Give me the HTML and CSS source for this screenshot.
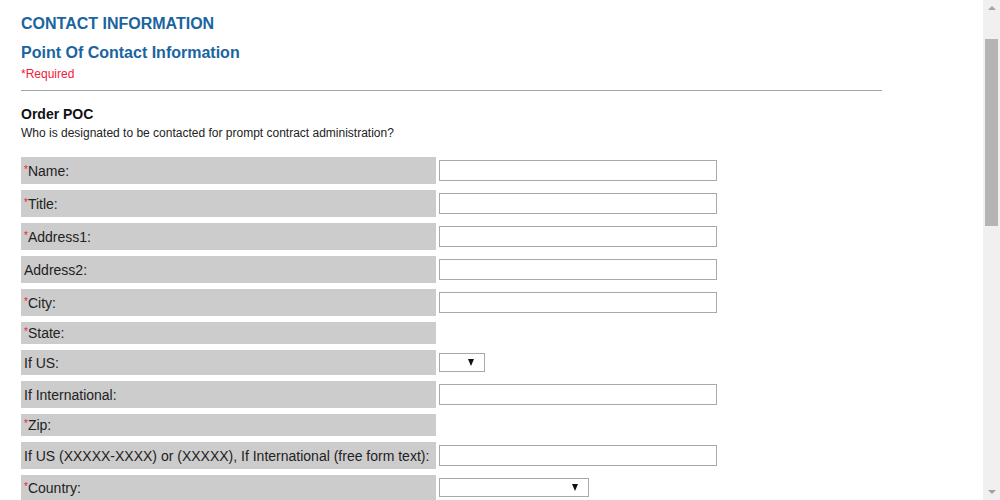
FILE: index.html
```html
<!DOCTYPE html>
<html>
<head>
<meta charset="utf-8">
<link rel="stylesheet" href="styles.css">
</head>
<body>
<div class="page">
  <h1 class="title">CONTACT INFORMATION</h1>
  <h2 class="subtitle">Point Of Contact Information</h2>
  <div class="required"><span>*</span>Required</div>
  <hr class="rule">
  <h3 class="section">Order POC</h3>
  <p class="desc">Who is designated to be contacted for prompt contract administration?</p>

  <div class="form">
    <div class="row"><div class="label"><span class="req">*</span>Name:</div><div class="field"><input class="text" type="text"></div></div>
    <div class="row"><div class="label"><span class="req">*</span>Title:</div><div class="field"><input class="text" type="text"></div></div>
    <div class="row"><div class="label"><span class="req">*</span>Address1:</div><div class="field"><input class="text" type="text"></div></div>
    <div class="row"><div class="label">Address2:</div><div class="field"><input class="text" type="text"></div></div>
    <div class="row"><div class="label"><span class="req">*</span>City:</div><div class="field"><input class="text" type="text"></div></div>
    <div class="row"><div class="label empty"><span class="req">*</span>State:</div><div class="field"></div></div>
    <div class="row"><div class="label">If US:</div><div class="field"><span class="sel small"><span class="arrow"></span></span></div></div>
    <div class="row"><div class="label">If International:</div><div class="field"><input class="text" type="text"></div></div>
    <div class="row"><div class="label empty"><span class="req">*</span>Zip:</div><div class="field"></div></div>
    <div class="row"><div class="label">If US (XXXXX-XXXX) or (XXXXX), If International (free form text):</div><div class="field"><input class="text" type="text"></div></div>
    <div class="row"><div class="label"><span class="req">*</span>Country:</div><div class="field"><span class="sel wide"><span class="arrow"></span></span></div></div>
    <div class="row"><div class="label"><span class="req">*</span>Phone:</div><div class="field"><input class="text" type="text"></div></div>
    <div class="row"><div class="label">Fax:</div><div class="field"><input class="text" type="text"></div></div>
  </div>
</div>
<div class="scrollbar">
  <div class="sb-up"></div>
  <div class="sb-thumb"></div>
  <div class="sb-down"></div>
</div>
</body>
</html>
```
FILE: styles.css
```css
html, body {
  margin: 0;
  padding: 0;
  overflow: hidden;
  background: #fff;
}
body {
  font-family: "Liberation Sans", Arial, sans-serif;
  color: #222;
}
.page {
  width: 861px;
  padding: 15px 0 0 21px;
}
.title {
  margin: 0;
  font-size: 16px;
  line-height: 18px;
  font-weight: bold;
  color: #1a64a0;
}
.subtitle {
  margin: 11px 0 0 0;
  font-size: 16px;
  line-height: 18px;
  font-weight: bold;
  color: #1a64a0;
}
.required {
  margin-top: 5px;
  font-size: 12px;
  line-height: 14px;
  color: #f0203a;
}
.rule {
  margin: 9px 0 0 0;
  border: 0;
  border-top: 1px solid #a5a5a5;
  height: 0;
}
.section {
  margin: 15px 0 0 0;
  font-size: 14px;
  line-height: 16px;
  font-weight: bold;
  color: #111;
}
.desc {
  margin: 4px 0 0 0;
  font-size: 12px;
  line-height: 14px;
  color: #222;
}
.form {
  margin-top: 17px;
  display: flex;
  flex-direction: column;
  gap: 6px;
}
.row {
  display: flex;
  gap: 3px;
}
.label {
  width: 415px;
  flex: none;
  box-sizing: border-box;
  background: #cccccc;
  padding-left: 3px;
  font-size: 14px;
  color: #222;
  display: flex;
  align-items: center;
  white-space: nowrap;
}
.label.empty {
  min-height: 22px;
}
.req {
  color: #f0203a;
  font-size: 10px;
  line-height: 10px;
  position: relative;
  top: -1px;
}
.field {
  padding: 3px 0;
  display: flex;
  align-items: center;
}
.text {
  box-sizing: border-box;
  width: 278px;
  height: 21px;
  margin: 0;
  border: 1px solid #a9a9a9;
  background: #fff;
  padding: 0 2px;
}
.sel {
  position: relative;
  display: block;
  box-sizing: border-box;
  height: 19px;
  border: 1px solid #a9a9a9;
  background: #fff;
}
.sel.small { width: 46px; }
.sel.wide { width: 150px; }
.arrow {
  position: absolute;
  right: 10px;
  top: 5px;
  width: 0;
  height: 0;
  border-left: 3.5px solid transparent;
  border-right: 3.5px solid transparent;
  border-top: 7px solid #111;
}
.scrollbar {
  position: fixed;
  top: 0;
  right: 0;
  width: 17px;
  height: 500px;
  background: #f0f0f0;
}
.sb-up {
  position: absolute;
  top: 6px;
  left: 5px;
  width: 0;
  height: 0;
  border-left: 4px solid transparent;
  border-right: 4px solid transparent;
  border-bottom: 4px solid #a3a3a3;
}
.sb-down {
  position: absolute;
  bottom: 6px;
  left: 5px;
  width: 0;
  height: 0;
  border-left: 4px solid transparent;
  border-right: 4px solid transparent;
  border-top: 4px solid #a3a3a3;
}
.sb-thumb {
  position: absolute;
  top: 39px;
  left: 2px;
  width: 13px;
  height: 187px;
  background: #b4b4b4;
}
```
